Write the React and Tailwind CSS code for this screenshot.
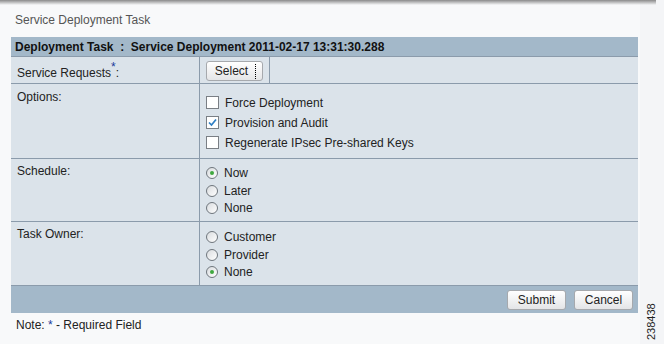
import React from "react";

const font = { fontFamily: '"Liberation Sans", Arial, sans-serif' };

function Checkbox({ checked }) {
  return (
    <span className="w-[13px] h-[13px] border border-[#7a7f85] bg-white flex items-center justify-center shrink-0">
      {checked && (
        <svg width="9" height="9" viewBox="0 0 9 9">
          <path d="M1 4.5 L3.5 7 L8 1.5" fill="none" stroke="#2f7fc4" strokeWidth="1.7" />
        </svg>
      )}
    </span>
  );
}

function Radio({ checked }) {
  return (
    <span className="w-[12px] h-[12px] rounded-full border border-[#6f767d] bg-gradient-to-br from-[#d9dcdf] to-white flex items-center justify-center shrink-0">
      {checked && <span className="w-[4px] h-[4px] rounded-full bg-[#3fa83f]" />}
    </span>
  );
}

function Btn({ children, focus, w }) {
  return (
    <div className={`relative h-[20px] ${w} rounded-[3px] border border-[#a6a9ad] bg-gradient-to-b from-white to-[#e4e5e7] flex items-center justify-center text-[12px] text-[#222]`}>
      {children}
      {focus && <span className="absolute right-[6px] top-[2px] h-[15px] border-l border-dotted border-black" />}
    </div>
  );
}

export default function App() {
  return (
    <div className="w-[664px] h-[344px] bg-[#f4f5f7] relative overflow-hidden text-[12px] text-[#222]" style={font}>
      <div className="absolute left-0 top-0 w-[656px] h-[5px] bg-gradient-to-b from-[#8a8a8a] to-transparent" />
      <div className="w-[640px] h-full bg-white/40">
        <div className="pt-[11px] pl-[15px] text-[12px] text-[#555] h-[37px]">Service Deployment Task</div>
        <div className="ml-[11px] w-[627px]">
          <div className="h-[20px] bg-[#a3b8c9] border-b border-[#8b9bab] pl-[4px] flex items-center font-bold text-[12px] text-[#111]">
            Deployment Task&nbsp;&nbsp;:&nbsp;&nbsp;Service Deployment 2011-02-17 13:31:30.288
          </div>
          <div className="bg-[#dbe3ea]">
            <div className="grid grid-cols-[189px_1fr] h-[27px] border-b border-[#8b9bab]">
              <div className="border-r border-[#8b9bab] pl-[6px] pt-[10px] leading-none">
                Service Requests<span className="text-[#1a3a9a] text-[12px] relative -top-[6px]">*</span>:
              </div>
              <div className="flex">
                <div className="w-[70px] border-r border-[#8b9bab] pl-[6px] pt-[4px]">
                  <Btn focus w="w-[57px]">
                    <span className="pr-[6px]">Select</span>
                  </Btn>
                </div>
              </div>
            </div>
            <div className="grid grid-cols-[189px_1fr] h-[75px] border-b border-[#8b9bab]">
              <div className="border-r border-[#8b9bab] pl-[6px] pt-[7px] leading-none">Options:</div>
              <div className="pl-[6px] pt-[12px] flex flex-col gap-[7px]">
                <div className="flex items-center gap-[6px] h-[13px]"><Checkbox /><span>Force Deployment</span></div>
                <div className="flex items-center gap-[6px] h-[13px]"><Checkbox checked /><span>Provision and Audit</span></div>
                <div className="flex items-center gap-[6px] h-[13px]"><Checkbox /><span>Regenerate IPsec Pre-shared Keys</span></div>
              </div>
            </div>
            <div className="grid grid-cols-[189px_1fr] h-[63px] border-b border-[#8b9bab]">
              <div className="border-r border-[#8b9bab] pl-[6px] pt-[6px] leading-none">Schedule:</div>
              <div className="pl-[6px] pt-[8px] flex flex-col gap-[5.5px]">
                <div className="flex items-center gap-[6px] h-[12px]"><Radio checked /><span>Now</span></div>
                <div className="flex items-center gap-[6px] h-[12px]"><Radio /><span>Later</span></div>
                <div className="flex items-center gap-[6px] h-[12px]"><Radio /><span>None</span></div>
              </div>
            </div>
            <div className="grid grid-cols-[189px_1fr] h-[64px] border-b border-[#8b9bab]">
              <div className="border-r border-[#8b9bab] pl-[6px] pt-[6px] leading-none">Task Owner:</div>
              <div className="pl-[6px] pt-[9px] flex flex-col gap-[5.5px]">
                <div className="flex items-center gap-[6px] h-[12px]"><Radio /><span>Customer</span></div>
                <div className="flex items-center gap-[6px] h-[12px]"><Radio /><span>Provider</span></div>
                <div className="flex items-center gap-[6px] h-[12px]"><Radio checked /><span>None</span></div>
              </div>
            </div>
          </div>
          <div className="h-[27px] bg-[#a3b8c9] flex items-center justify-end gap-[8px] pr-[5px]">
            <Btn w="w-[59px]">Submit</Btn>
            <Btn w="w-[59px]">Cancel</Btn>
          </div>
          <div className="pl-[5px] pt-[3px] text-[12px] text-[#222]">
            Note: <span className="text-[#1a3a9a]">*</span> - Required Field
          </div>
        </div>
      </div>
      <div className="absolute left-[646px] top-[340px] origin-top-left -rotate-90 text-[11px] text-[#222] leading-none">238438</div>
    </div>
  );
}
